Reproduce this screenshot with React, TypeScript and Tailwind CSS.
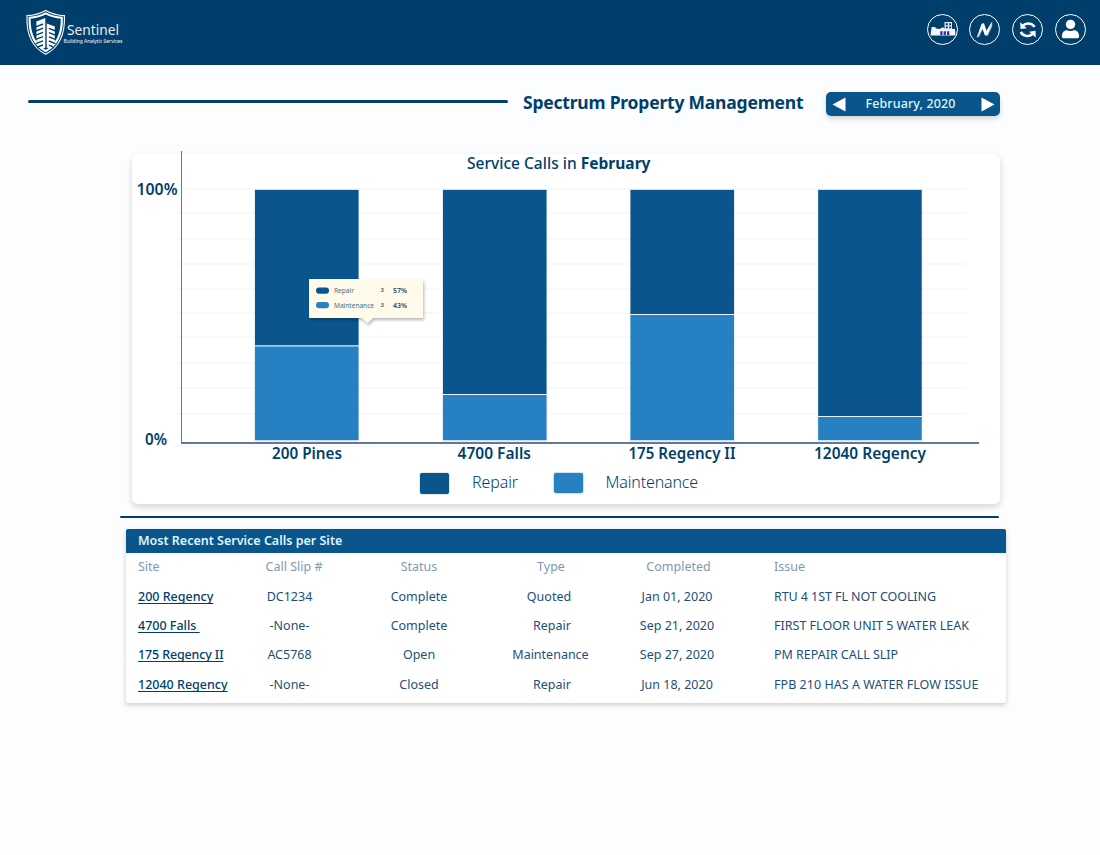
import type { ReactNode } from "react";

const bars = [
  { name: "200 Pines", x: 255, split: 346, labelX: 272, labelW: 70 },
  { name: "4700 Falls", x: 443, split: 394.5, labelX: 457.5, labelW: 73.5 },
  { name: "175 Regency II", x: 630.5, split: 314.5, labelX: 628.5, labelW: 107 },
  { name: "12040 Regency", x: 818.2, split: 416.5, labelX: 814, labelW: 112 },
];

const gridLines = [189, 213, 239, 264, 289, 313, 337, 363, 388, 414];

const calls = [
  { site: "200 Regency", slip: "DC1234", status: "Complete", type: "Quoted", completed: "Jan 01, 2020", issue: "RTU 4 1ST FL NOT COOLING", siteFit: "", typeFit: "pr-[6px]", fit: "tracking-[-0.07px]" },
  { site: "4700 Falls\u00a0", slip: "-None-", status: "Complete", type: "Repair", completed: "Sep 21, 2020", issue: "FIRST FLOOR UNIT 5 WATER LEAK", siteFit: "", typeFit: "", fit: "tracking-[0.01px]" },
  { site: "175 Regency II", slip: "AC5768", status: "Open", type: "Maintenance", completed: "Sep 27, 2020", issue: "PM REPAIR CALL SLIP", siteFit: "tracking-[-0.14px]", typeFit: "pr-[3px]", fit: "tracking-[-0.02px]" },
  { site: "12040 Regency", slip: "-None-", status: "Closed", type: "Repair", completed: "Jun 18, 2020", issue: "FPB 210 HAS A WATER FLOW ISSUE", siteFit: "", typeFit: "", fit: "tracking-[0.04px]" },
];

function Logo() {
  return (
    <svg width="100" height="46" viewBox="25 9 100 46" fill="none" role="img">
      <path d="M45.7 10.4 C40 13.6 33.5 15.3 27 15.6 C26.2 33 30.5 46.5 45.7 54.3 C60.9 46.5 65.2 33 64.4 15.6 C57.9 15.3 51.4 13.6 45.7 10.4Z" stroke="#fff" strokeWidth="1.1" />
      <path d="M45.7 13.4 C40.7 16 35.2 17.4 29.6 17.8 C29.1 33 33.2 44.2 45.7 51.2 C58.2 44.2 62.3 33 61.8 17.8 C56.2 17.4 50.7 16 45.7 13.4Z" stroke="#fff" strokeWidth="2.1" />
      <path d="M36.4 21.5 L45.3 18 V47.5 L42.5 49 L36.4 42Z M46.7 23.4 L54.8 26.5 V42 L49 48.5 L46.7 47.5Z" fill="#fff" />
      <path d="M35.8 26.8 L43 24 M35.8 31 L43 28.2 M35.8 35.2 L43 32.4 M35.8 39.4 L43 36.6 M35.8 43.6 L43 40.8 M37 47.2 L43 45 M48.9 28.4 L55.5 31 M48.9 32.6 L55.5 35.2 M48.9 36.8 L55.5 39.4 M48.9 41 L55.5 43.6 M48.9 45.2 L53 46.8" stroke="#003f6b" strokeWidth="1.4" />
      <text x="67" y="35" fill="#e6edf3" fontSize="14" fontWeight="400" fontFamily="Noto Sans, sans-serif" textLength="52" lengthAdjust="spacingAndGlyphs">Sentinel</text>
      <text x="63.5" y="42.6" fill="#fff" fontSize="5" fontFamily="Noto Sans, sans-serif" textLength="59" lengthAdjust="spacingAndGlyphs">Building Analytic Services</text>
    </svg>
  );
}

function RoundButton({ label, children }: { label: string; children: ReactNode }) {
  return (
    <button aria-label={label} className="size-[31px]">
      <svg width="31" height="31" viewBox="0 0 31 31" fill="none">
        <circle cx="15.5" cy="15.5" r="15" stroke="#fff" strokeWidth="1" />
        {children}
      </svg>
    </button>
  );
}

function Header() {
  return (
    <header className="flex h-[65px] items-start justify-between bg-[#003f6b] pl-[25px] pr-[14px]">
      <div className="pt-[9px]">
        <Logo />
      </div>
      <nav className="grid grid-cols-[42px_43px_43px_31px] pt-[14px]">
        <RoundButton label="Buildings">
          <path d="M3.4 21.6 L4.7 13 H8 L9 14.5 L12.5 15 L16 13.2 L17.5 14.5 H18 L28 15 L28.5 21.6Z" fill="#f4f4fa" />
          <path d="M17.5 8 H25 V15.5 H17.5Z" fill="#dfe6ef" />
          <path d="M18.8 9.2h2v2h-2z M22.2 9.2h1.8v2h-1.8z M18.8 12.4h2v1.8h-2z M22.2 12.4h1.8v1.8h-1.8z" fill="#003f6b" />
          <path d="M13.2 17.2h2.3v3.8h-2.3z M16.6 17.2h2.3v3.8h-2.3z M20 17.2h2.3v3.8h-2.3z" fill="#34359b" />
        </RoundButton>
        <RoundButton label="Energy">
          <path d="M7.6 23.5 L13.4 9.6 L17 17.2 L23.2 7.5 V12.5 L18.6 22 L16 21 L13.8 15 L10 23Z" fill="#b4c0cb" />
          <path d="M7.8 23.7 L12.6 9.8 L15 9.2 L17.6 17 L23.2 7.3 L18.4 20.8 L16 21.6 L13.4 14.4Z" fill="#fff" />
        </RoundButton>
        <RoundButton label="Refresh">
          <g stroke="#fff" strokeWidth="2.5">
            <path d="M10.8 11.6 C14 8.4 20 8.6 22.5 13" />
            <path d="M20.3 20.2 C16.8 23.2 11.2 22.2 8.7 18" />
          </g>
          <path d="M8.2 8.3 L8.5 15 L14.8 14.2Z M23.8 23.5 L23.5 16.8 L17 17.8Z" fill="#fff" />
          <path d="M14.5 12.2 C17 11.2 19.8 12 21.2 14 M16.5 20.1 C14 20.6 11.6 19.4 10.2 17.2" stroke="#4943a5" strokeWidth=".8" />
        </RoundButton>
        <RoundButton label="Account">
          <circle cx="15.5" cy="10.4" r="4.7" fill="#fff" />
          <path d="M6.9 22.5 C6.9 18.5 9 16.3 12 16.3 C13.9 17.2 17.1 17.2 19 16.3 C22 16.3 24.1 18.5 24.1 22.5 C24.1 23.6 23.4 24.2 22.5 24.2 H8.5 C7.6 24.2 6.9 23.6 6.9 22.5Z" fill="#fff" />
        </RoundButton>
      </nav>
    </header>
  );
}

function TitleBar() {
  return (
    <div className="flex h-6 items-center pl-7">
      <div className="mb-[5px] h-[3px] w-[480px] rounded-full bg-[#003f6b]" />
      <h1 className="mb-[5px] ml-[15px] w-[280px] whitespace-nowrap text-[17.5px] font-bold leading-6 tracking-[-0.21px]">
        Spectrum Property Management
      </h1>
      <div className="ml-[23px] flex h-6 w-[174px] items-center justify-between rounded-[5px] bg-[#0a558c] pl-[6px] pr-[5px] text-white shadow-[0_3px_5px_rgba(0,0,0,0.16)]">
        <svg width="14" height="15" viewBox="0 0 14 15"><path d="M0.5 7.5 L13.5 .5V14.5Z" fill="#fff" /></svg>
        <span className="mr-[6px] whitespace-nowrap text-[12.5px] font-medium tracking-[0.12px] text-[#dff7fb]">February, 2020</span>
        <svg width="14" height="15" viewBox="0 0 14 15"><path d="M13.5 7.5 L.5 .5V14.5Z" fill="#fff" /></svg>
      </div>
    </div>
  );
}

function Chart() {
  return (
    <svg width="868" height="315" viewBox="132 151 868 315" className="-mt-[3px] block overflow-visible" fontFamily="Noto Sans, sans-serif" fill="#003f6b">
      {gridLines.map((y) => (
        <path key={y} d={`M177 ${y}H966`} stroke="#f9f9fa" strokeWidth="2" />
      ))}
      <path d="M172 446H765" stroke="#f9fafb" strokeWidth="2" />
      <text x="467" y="169" fontSize="15.5" fontWeight="500" textLength="183.5" lengthAdjust="spacingAndGlyphs">
        Service Calls in <tspan fontWeight="700">February</tspan>
      </text>
      <text x="136.5" y="195" fontSize="15.5" fontWeight="600" textLength="41" lengthAdjust="spacingAndGlyphs">100%</text>
      <text x="145" y="445" fontSize="15.5" fontWeight="600" textLength="22" lengthAdjust="spacingAndGlyphs">0%</text>
      {bars.map((b) => (
        <g key={b.name}>
          <rect x={b.x - 0.5} y="189" width="104.5" height="252.5" fill="#cfe0ec" />
          <rect x={b.x} y="190" width="103.5" height={b.split - 190.5} fill="#0a558c" />
          <rect x={b.x} y={b.split - 0.5} width="103.5" height="1" fill="#eef5fa" />
          <rect x={b.x} y={b.split + 0.5} width="103.5" height={439.5 - b.split} fill="#2780c2" />
          <text x={b.labelX} y="459" fontSize="15.5" fontWeight="600" textLength={b.labelW} lengthAdjust="spacingAndGlyphs">{b.name}</text>
        </g>
      ))}
      <path d="M181 151h1v293h-1z M181 442h798v2h-798z" fill="#5f7b99" />
      <g fontSize="6.5">
        <path d="M309 279H423V318H373L367.5 323.5L362 318H309Z" fill="#fffbea" className="drop-shadow-[1px_2px_1.5px_rgba(0,0,0,0.28)]" />
        <rect x="316" y="287.5" width="13" height="6.2" rx="3" fill="#0a558c" />
        <rect x="316" y="302" width="13" height="6.2" rx="3" fill="#2780c2" />
        <g fill="#45718f">
          <text x="334" y="292.8" textLength="20" lengthAdjust="spacingAndGlyphs">Repair</text>
          <text x="334" y="307.8" textLength="40" lengthAdjust="spacingAndGlyphs">Maintenance</text>
        </g>
        <g fill="#2d4552" fontWeight="600">
          <text x="380.5" y="292" fontSize="5.8">3</text>
          <text x="380.5" y="307" fontSize="5.8">3</text>
          <text x="393" y="293" textLength="14" lengthAdjust="spacingAndGlyphs">57%</text>
          <text x="393" y="308" textLength="14" lengthAdjust="spacingAndGlyphs">43%</text>
        </g>
      </g>
    </svg>
  );
}

function Legend() {
  return (
    <div className="flex h-[34px] items-center pl-[288px] text-[16px] font-light leading-[22px]">
      <span className="h-[21px] w-[29px] rounded-[2px] bg-[#0a558c] shadow-[0_0_1px_1px_rgba(0,0,0,0.1)]" />
      <span className="mb-[2px] ml-[23px] w-[46px] whitespace-nowrap tracking-[-0.1px]">Repair</span>
      <span className="ml-[35.5px] h-[20px] w-[29px] rounded-[2px] bg-[#2780c2] shadow-[0_0_1px_1px_rgba(39,128,194,0.25)]" />
      <span className="mb-[2px] ml-[23px] whitespace-nowrap tracking-[-0.15px]">Maintenance</span>
    </div>
  );
}

const columns = "grid grid-cols-[109px_110px_148px_118px_132px_1fr] items-center whitespace-nowrap text-center";

function RecentCalls() {
  return (
    <section className="ml-[126px] mt-[11px] h-[174px] w-[880px] rounded-[2px] bg-white text-[12.5px] leading-[18px] shadow-[0_2px_5px_rgba(0,0,0,0.2)]">
      <h2 className="flex h-6 items-center rounded-t-[2px] bg-[#0a558c] pl-3 font-semibold text-[#dff7fb]">
        <span>Most Recent Service Calls per Site</span>
      </h2>
      <div className={`${columns} h-[28px] text-[#8198b3]`}>
        <span className="pl-3 text-left">Site</span>
        <span className="pl-2">Call Slip #</span>
        <span>Status</span>
        <span className="pr-[2px]">Type</span>
        <span className="pl-[3px]">Completed</span>
        <span className="pl-[31px] text-left">Issue</span>
      </div>
      <div className="flex flex-col pt-[0.9px]">
        {calls.map((c) => (
          <div key={c.site} className={`${columns} h-[29.4px] text-[#1d4f7b]`}>
            <span className={`pl-3 text-left font-medium text-[#003f6b] ${c.siteFit}`}>
              <a className="underline decoration-1 underline-offset-2 [text-decoration-skip-ink:none]">{c.site}</a>
            </span>
            <span className="pr-px">{c.slip}</span>
            <span>{c.status}</span>
            <span className={c.typeFit}>{c.type}</span>
            <span>{c.completed}</span>
            <span className={`pl-[31px] text-left ${c.fit}`}>{c.issue}</span>
          </div>
        ))}
      </div>
    </section>
  );
}

export default function App() {
  return (
    <div className="h-[855px] w-[1100px] overflow-hidden bg-[#fcfdfe] font-['Noto_Sans',sans-serif] text-[#003f6b]">
      <Header />
      <main className="flex flex-col pt-[27px]">
        <TitleBar />
        <section className="ml-[132px] mt-[38px] h-[350px] w-[868px] rounded-[6px] bg-white shadow-[0_3px_6px_rgba(0,0,0,0.16)]">
          <Chart />
          <Legend />
        </section>
        <div className="ml-[120px] mt-3 h-[2px] w-[879px] rounded-full bg-[#003f6b]" />
        <RecentCalls />
      </main>
    </div>
  );
}
